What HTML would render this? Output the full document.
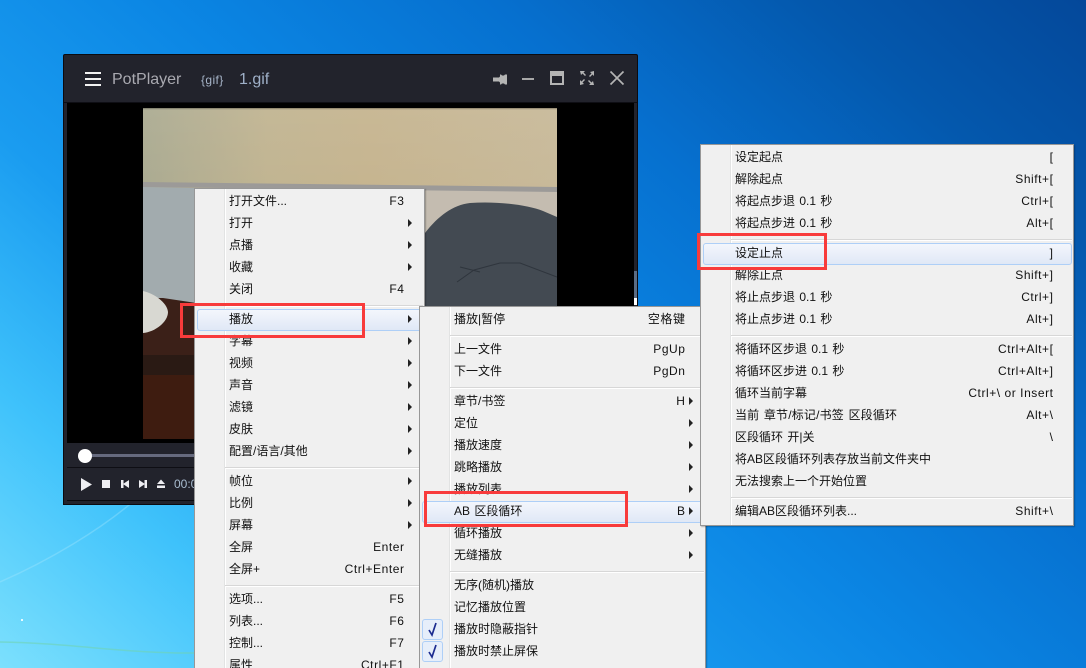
<!DOCTYPE html>
<html lang="zh"><head><meta charset="utf-8"><title>PotPlayer</title>
<style>
html,body{margin:0;padding:0}
#d{position:relative;width:1086px;height:668px;overflow:hidden;
background:linear-gradient(41deg,#7ce0fd 0%,#3fc2fb 17%,#1a9cf0 33%,#0b86e4 50%,#0670cf 68%,#0458ad 85%,#04489a 100%);
font:12px/22px "Liberation Sans","Noto Sans CJK SC",sans-serif;color:#111}
.a{position:absolute}
.win{left:63px;top:54px;width:575px;height:451px;background:#22232c;border:1px solid #0b0b10;box-sizing:border-box;border-radius:2px 2px 0 0}
.m{position:absolute;background:#f0f0f0;border:1px solid #979797;box-sizing:border-box;padding-top:1px;overflow:hidden;box-shadow:1px 1px 1px rgba(0,0,0,.25)}
.g{position:absolute;left:29px;top:0;bottom:0;width:1px;background:#e2e3e3;box-shadow:1px 0 0 #fff}
.r{position:relative;height:22px;line-height:23px;padding-left:34px;white-space:nowrap;word-spacing:1px}
.r b{font-weight:normal;position:absolute;right:19.5px;top:0;letter-spacing:.55px;word-spacing:0}
.r.h{z-index:1}
.r.h:before{content:"";position:absolute;left:2px;right:1px;top:1px;height:20px;border:1px solid #aecff7;border-radius:3px;background:linear-gradient(#f3f6fc,#e0e8f6)}
.r span,.r b{z-index:2}
.r span{position:relative}
.r.ar:after{content:"";position:absolute;right:12px;top:7px;border-left:4px solid #222;border-top:4px solid transparent;border-bottom:4px solid transparent}
.sp{position:relative;height:8px}
.sp:after{content:"";position:absolute;left:30px;right:1px;top:5px;height:1px;background:#d7d7d7;box-shadow:0 1px 0 #fff}
.red{position:absolute;border:3px solid #f83b3b;box-sizing:border-box;z-index:20}
.ck{position:absolute;left:2px;top:1px;width:21px;height:21px;box-sizing:border-box;border:1px solid #aecff7;border-radius:3px;background:#e6eefa}
</style></head><body>
<div id="d">
<svg class="a" style="left:0;top:0" width="1086" height="668" viewBox="0 0 1086 668" fill="none">
<path d="M0 582C50 560 100 530 135 500" stroke="#a8e8fc" stroke-width="1.500" opacity=".35"/>
<path d="M0 642C70 643 130 654 195 653" stroke="#6fd4b4" stroke-width="1.500" opacity=".6"/>
<rect x="21" y="619" width="2" height="2" fill="#e8fbff"/>
</svg>

<div class="a win"></div>
<div class="a" style="left:64px;top:102px;width:573px;height:1px;background:#0e0e14"></div>
<div class="a" style="left:67px;top:103px;width:567px;height:340px;background:#000"></div>
<svg class="a" style="left:143px;top:108px" width="414" height="331" viewBox="0 0 414 331">
<defs><linearGradient id="w" x1="0" y1="0" x2="1" y2="0"><stop offset="0" stop-color="#a8a88e"/><stop offset=".3" stop-color="#bfb28e"/><stop offset=".55" stop-color="#c4b28c"/><stop offset="1" stop-color="#c6b796"/></linearGradient>
<linearGradient id="w2" x1="0" y1="0" x2="0" y2="1"><stop offset="0" stop-color="#000" stop-opacity=".35"/><stop offset=".03" stop-color="#fff" stop-opacity=".08"/><stop offset="1" stop-color="#fff" stop-opacity=".03"/></linearGradient></defs>
<rect width="414" height="331" fill="#c4bcb0"/>
<rect width="414" height="82" fill="url(#w)"/>
<rect width="414" height="82" fill="url(#w2)"/>
<path d="M0 74L414 79V84L0 79Z" fill="#9c9a98"/>
<path d="M0 79L100 81V200H0Z" fill="#a2abae"/>
<path d="M0 224H60V331H0Z" fill="#3b2018"/>
<path d="M60 196V226H0V190H20Z" fill="#3b2018"/>
<path d="M0 183C10 185 24 194 25 204C25 214 12 224 0 225Z" fill="#d8d8d2"/>
<rect y="247" width="60" height="20" fill="#2a1a14"/>
<rect y="267" width="60" height="64" fill="#3e1c10"/>
<path d="M270 135L282 125C295 108 310 97 327 95C355 93 385 97 400 103L414 109V331H270Z" fill="#434a52"/>
<path d="M314 174L331 162L357 155H377L414 169M317 159L337 164" stroke="#2f353d" stroke-width="1" fill="none"/>
</svg>
<div class="a" style="left:634px;top:271px;width:3px;height:34px;background:#5a6c84"></div>
<div class="a" style="left:634px;top:298px;width:3px;height:7px;background:#fff"></div>

<div class="a" style="left:67px;top:467px;width:130px;height:1px;background:#0e0e14"></div>
<div class="a" style="left:85px;top:454px;width:110px;height:3px;background:#666a7e"></div>
<div class="a" style="left:78px;top:449px;width:14px;height:14px;border-radius:50%;background:#fff"></div>
<div class="a" style="left:67px;top:500px;width:567px;height:1px;background:#0a0a0e"></div>
<svg class="a" style="left:64px;top:54px" width="572" height="450" viewBox="64 54 572 450" fill="#b4b4b4">
<path d="M85 72h16v2H85zM85 78h16v2H85zM85 84h16v2H85z" fill="#f2f2f2"/>
<path d="M493 77.500h6l1-1v-2h1l1 1h2l1-1h2v10h-2l-1-1h-2l-1 1h-1v-2l-1-1h-6z"/>
<rect x="522" y="78" width="12" height="2" fill="#a8a8a8"/>
<path fill-rule="evenodd" d="M550 71h14v14h-14zM552 76v7h10v-7z"/>
<path d="M580 71h5l-1.500 1.500 2.500 2.500-1 1-2.500-2.500-1.500 1.500 -1-4zM594 71v5l-1.500-1.500-2.500 2.500-1-1 2.500-2.500-1.500-1.500zM580 85v-5l1.500 1.500 2.500-2.500 1 1-2.500 2.500 1.500 1.500zM594 85h-5l1.500-1.500-2.500-2.500 1-1 2.500 2.500 1.500-1.500z"/>
<path d="M610.500 71.500l13 13M623.500 71.500l-13 13" stroke="#b4b4b4" stroke-width="1.700" fill="none"/>
<path d="M81 478l11 6.500-11 6.500z" fill="#eeeef2"/>
<rect x="102" y="480" width="8" height="8" fill="#eeeef2"/>
<path d="M121 480h2.500v8h-2.500zM129 480v8l-6-4z" fill="#eeeef2"/>
<path d="M147 480h-2.500v8h2.500zM139 480v8l6-4z" fill="#eeeef2"/>
<path d="M161 479.500l4 4.500h-8zM157 485.500h8v2.500h-8z" fill="#eeeef2"/>
</svg>
<div class="a" style="left:112px;top:69px;font-size:16px;color:#a9a9b0">PotPlayer</div>
<div class="a" style="left:201px;top:69px;font-size:12px;color:#a6b4c8;letter-spacing:.4px">{gif}</div>
<div class="a" style="left:239px;top:69px;font-size:16px;color:#9fb0c8">1.gif</div>
<div class="a" style="left:174px;top:473px;font-size:12px;color:#a9bcd0">00:0</div>

<div class="m" style="left:194px;top:188px;width:231px;height:490px;z-index:5"><div class="g"></div>
<div class="r"><span>打开文件...</span><b>F3</b></div>
<div class="r ar"><span>打开</span></div>
<div class="r ar"><span>点播</span></div>
<div class="r ar"><span>收藏</span></div>
<div class="r"><span>关闭</span><b>F4</b></div>
<div class="sp"></div>
<div class="r ar h"><span>播放</span></div>
<div class="r ar"><span>字幕</span></div>
<div class="r ar"><span>视频</span></div>
<div class="r ar"><span>声音</span></div>
<div class="r ar"><span>滤镜</span></div>
<div class="r ar"><span>皮肤</span></div>
<div class="r ar"><span>配置/语言/其他</span></div>
<div class="sp"></div>
<div class="r ar"><span>帧位</span></div>
<div class="r ar"><span>比例</span></div>
<div class="r ar"><span>屏幕</span></div>
<div class="r"><span>全屏</span><b>Enter</b></div>
<div class="r"><span>全屏+</span><b>Ctrl+Enter</b></div>
<div class="sp"></div>
<div class="r"><span>选项...</span><b>F5</b></div>
<div class="r"><span>列表...</span><b>F6</b></div>
<div class="r"><span>控制...</span><b>F7</b></div>
<div class="r"><span>属性</span><b>Ctrl+F1</b></div>
</div>

<div class="m" style="left:419px;top:306px;width:287px;height:380px;z-index:6"><div class="g"></div>
<div class="r"><span>播放|暂停</span><b>空格键</b></div>
<div class="sp"></div>
<div class="r"><span>上一文件</span><b>PgUp</b></div>
<div class="r"><span>下一文件</span><b>PgDn</b></div>
<div class="sp"></div>
<div class="r ar"><span>章节/书签</span><b>H</b></div>
<div class="r ar"><span>定位</span></div>
<div class="r ar"><span>播放速度</span></div>
<div class="r ar"><span>跳略播放</span></div>
<div class="r ar"><span>播放列表</span></div>
<div class="r ar h"><span>AB 区段循环</span><b>B</b></div>
<div class="r ar"><span>循环播放</span></div>
<div class="r ar"><span>无缝播放</span></div>
<div class="sp"></div>
<div class="r"><span>无序(随机)播放</span></div>
<div class="r"><span>记忆播放位置</span></div>
<div class="r"><div class="ck"></div><span>播放时隐蔽指针</span></div>
<div class="r"><div class="ck"></div><span>播放时禁止屏保</span></div>
</div>
<svg class="a" style="left:422px;top:619px;z-index:7" width="22" height="44" viewBox="0 0 22 44" fill="none" stroke="#1c2c90" stroke-width="1.700"><path d="M7 11l3 5 4-12M7 33l3 5 4-12"/></svg>

<div class="m" style="left:700px;top:144px;width:374px;height:382px;z-index:8"><div class="g"></div>
<div class="r"><span>设定起点</span><b>[</b></div>
<div class="r"><span>解除起点</span><b>Shift+[</b></div>
<div class="r"><span>将起点步退 0.1 秒</span><b>Ctrl+[</b></div>
<div class="r"><span>将起点步进 0.1 秒</span><b>Alt+[</b></div>
<div class="sp"></div>
<div class="r h"><span>设定止点</span><b>]</b></div>
<div class="r"><span>解除止点</span><b>Shift+]</b></div>
<div class="r"><span>将止点步退 0.1 秒</span><b>Ctrl+]</b></div>
<div class="r"><span>将止点步进 0.1 秒</span><b>Alt+]</b></div>
<div class="sp"></div>
<div class="r"><span>将循环区步退 0.1 秒</span><b>Ctrl+Alt+[</b></div>
<div class="r"><span>将循环区步进 0.1 秒</span><b>Ctrl+Alt+]</b></div>
<div class="r"><span>循环当前字幕</span><b>Ctrl+\ or Insert</b></div>
<div class="r"><span style="letter-spacing:.18px">当前 章节/标记/书签 区段循环</span><b>Alt+\</b></div>
<div class="r"><span>区段循环 开|关</span><b>\</b></div>
<div class="r"><span>将AB区段循环列表存放当前文件夹中</span></div>
<div class="r"><span>无法搜索上一个开始位置</span></div>
<div class="sp"></div>
<div class="r"><span>编辑AB区段循环列表...</span><b>Shift+\</b></div>
</div>

<div class="red" style="left:180px;top:303px;width:185px;height:35px"></div>
<div class="red" style="left:424px;top:491px;width:204px;height:36px"></div>
<div class="red" style="left:697px;top:233px;width:130px;height:37px"></div>
</div>
</body></html>
